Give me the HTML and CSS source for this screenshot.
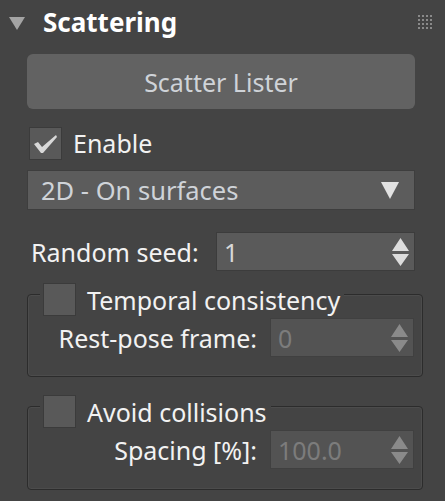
FILE: index.html
```html
<!DOCTYPE html>
<html>
<head>
<meta charset="utf-8">
<link rel="stylesheet" href="styles.css">
</head>
<body>
<div class="panel">
  <div class="header">
    <span class="caret"></span>
    <span class="title">Scattering</span>
    <svg class="grip" width="16" height="16" viewBox="0 0 16 16">
      <g fill="#8a8a8a">
        <rect x="0" y="0" width="2" height="2"/><rect x="4" y="0" width="2" height="2"/><rect x="8" y="0" width="2" height="2"/><rect x="12" y="0" width="2" height="2"/>
        <rect x="0" y="4" width="2" height="2"/><rect x="4" y="4" width="2" height="2"/><rect x="8" y="4" width="2" height="2"/><rect x="12" y="4" width="2" height="2"/>
        <rect x="0" y="8" width="2" height="2"/><rect x="4" y="8" width="2" height="2"/><rect x="8" y="8" width="2" height="2"/><rect x="12" y="8" width="2" height="2"/>
        <rect x="0" y="12" width="2" height="2"/><rect x="4" y="12" width="2" height="2"/><rect x="8" y="12" width="2" height="2"/><rect x="12" y="12" width="2" height="2"/>
      </g>
    </svg>
  </div>
  <div class="body">
    <div class="button">Scatter Lister</div>
    <div class="check-row">
      <span class="box">
        <svg width="25" height="20" viewBox="0 0 25 20"><path d="M1 10 L5 8 L9 13 L23 1 L24 3 L10 19 L8 19 Z" fill="#d8d8d8"/></svg>
      </span>
      <span class="label">Enable</span>
    </div>
    <div class="dropdown">
      <span>2D - On surfaces</span>
      <svg class="dd-arrow" width="18" height="17" viewBox="0 0 18 17"><path d="M0 0 H18 L9 17 Z" fill="#e2e2e2"/></svg>
    </div>
    <div class="field-row seed">
      <span class="flabel">Random seed:</span>
      <div class="spinner">
        <span class="val">1</span>
        <svg class="arrows" width="17" height="28" viewBox="0 0 17 28"><path d="M8.5 0 L17 13 H0 Z M0 16 H17 L8.5 28 Z" fill="#dcdcdc"/></svg>
      </div>
    </div>
    <div class="group g1">
      <div class="legend">
        <span class="box"></span>
        <span class="label">Temporal consistency</span>
      </div>
      <div class="field-row sub">
        <span class="flabel right">Rest-pose frame:</span>
        <div class="spinner disabled">
          <span class="val">0</span>
          <svg class="arrows" width="17" height="28" viewBox="0 0 17 28"><path d="M8.5 0 L17 13 H0 Z M0 16 H17 L8.5 28 Z" fill="#8a8a8a"/></svg>
        </div>
      </div>
    </div>
    <div class="group g2">
      <div class="legend">
        <span class="box"></span>
        <span class="label">Avoid collisions</span>
      </div>
      <div class="field-row sub">
        <span class="flabel right">Spacing [%]:</span>
        <div class="spinner disabled">
          <span class="val">100.0</span>
          <svg class="arrows" width="17" height="28" viewBox="0 0 17 28"><path d="M8.5 0 L17 13 H0 Z M0 16 H17 L8.5 28 Z" fill="#8a8a8a"/></svg>
        </div>
      </div>
    </div>
  </div>
</div>
</body>
</html>
```

FILE: styles.css
```css
html, body {
  margin: 0;
  padding: 0;
  background: #444444;
}
body {
  width: 445px;
  height: 501px;
  overflow: hidden;
  font-family: "Noto Sans", "DejaVu Sans", sans-serif;
  font-size: 25px;
  color: #f2f2f2;
}
.panel {
  display: flex;
  flex-direction: column;
}
.header {
  height: 44px;
  display: flex;
  align-items: center;
  position: relative;
}
.caret {
  width: 0;
  height: 0;
  margin-left: 9px;
  margin-top: 2px;
  border-left: 8px solid transparent;
  border-right: 8px solid transparent;
  border-top: 13px solid #a4a4a4;
}
.title {
  margin-left: 18px;
  font-weight: bold;
  font-size: 26px;
  color: #ffffff;
  line-height: 30px;
}
.grip {
  margin-left: auto;
  margin-right: 11px;
  margin-top: 2px;
}
.body {
  padding: 10px 30px 0 27px;
  display: flex;
  flex-direction: column;
}
.button {
  height: 55px;
  background: #626262;
  border-radius: 6px;
  display: flex;
  align-items: center;
  justify-content: center;
  color: #cfd3d8;
  font-size: 25px;
}
.check-row {
  display: flex;
  align-items: center;
  margin-top: 18px;
  margin-left: 2px;
  height: 32px;
}
.box {
  width: 31px;
  height: 31px;
  background: #595959;
  border: 1px solid #3b3b3b;
  display: flex;
  align-items: center;
  justify-content: center;
  flex: none;
  box-sizing: content-box;
}
.box svg {
  margin-top: 2px;
}
.label {
  margin-left: 11px;
  line-height: 32px;
}
.dropdown {
  margin-top: 11px;
  height: 38px;
  background: #5c5c5c;
  border: 1px solid #3e3e3e;
  display: flex;
  align-items: center;
  padding-left: 13px;
  padding-right: 15px;
  color: #cfd3d8;
  font-size: 25.5px;
}
.dd-arrow {
  margin-left: auto;
}
.field-row {
  display: flex;
  align-items: center;
}
.seed {
  margin-top: 22px;
}
.flabel {
  flex: 1;
  padding-left: 4px;
  white-space: nowrap;
}
.flabel.right {
  text-align: right;
  padding-right: 13px;
}
.spinner {
  height: 37px;
  background: #5a5a5a;
  border: 1px solid #3c3c3c;
  display: flex;
  align-items: center;
  padding-left: 7px;
  padding-right: 5px;
  color: #d8d8d8;
}
.seed .spinner {
  width: 185px;
}
.spinner .arrows {
  margin-left: auto;
}
.spinner.disabled {
  width: 130px;
  background: #535353;
  border-color: #404040;
  color: #7c7c7c;
}
.group {
  margin-right: -8px;
  border: 1px solid #2c2c2c;
  box-shadow: inset 0 0 0 1px #4c4c4c;
  border-radius: 4px;
  padding: 0 8px 7px 0;
  display: flex;
  flex-direction: column;
}
.g1 {
  margin-top: 23px;
  height: 74px;
}
.g2 {
  margin-top: 29px;
  height: 75px;
}
.legend {
  display: flex;
  align-items: center;
  margin-top: -12px;
  margin-left: 12px;
  align-self: flex-start;
  background: #444444;
  padding: 0 4px 0 3px;
  height: 33px;
}
.sub {
  margin-top: 2px;
}
```
